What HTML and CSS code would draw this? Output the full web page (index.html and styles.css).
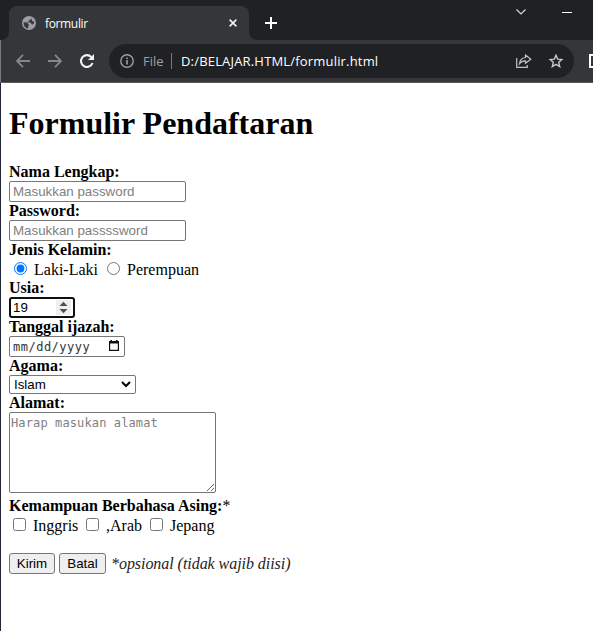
FILE: index.html
```html
<!DOCTYPE html>
<html lang="id">
<head>
<meta charset="utf-8">
<title>formulir</title>
<link rel="stylesheet" href="styles.css">
</head>
<body>
<header class="browser">
  <div class="tabs">
    <div class="tab">
      <svg class="globe" width="14" height="14" viewBox="0 0 14 14"><circle cx="7" cy="7" r="7" fill="#9aa0a6"/><path d="M1.5 6.2L4.8 6.4L7 8.8L6.200 10.2L6.2 12.6Q1.8 12 1.5 6.2ZM7 1.5H9.500L9 3.2L7.2 4V5.500H5.500V6.600H8.700L9.600 8.200L11 8.500Q12.700 6.8 12 5.2L10.400 5.4L9.600 3.8L9.500 1.500" fill="#35363a"/></svg>
      <span class="tab-title">formulir</span>
      <svg class="close" width="8" height="8" viewBox="0 0 8 8"><path d="M.6 .6L7.4 7.4M7.4 .6L.6 7.4" stroke="#f1f3f4" stroke-width="1.6"/></svg>
    </div>
    <svg class="plus" width="12" height="12" viewBox="0 0 12 12"><path d="M6 0V12M0 6H12" stroke="#fff" stroke-width="2"/></svg>
    <div class="window-buttons">
      <svg width="10" height="6" viewBox="0 0 10 6"><path d="M.5 .5L5 5L9.5 .5" fill="none" stroke="#ddd" stroke-width="1.1"/></svg>
      <svg width="10" height="6" viewBox="0 0 10 6"><path d="M0 3.5H10" stroke="#fff"/></svg>
    </div>
  </div>
  <div class="toolbar">
    <div class="nav">
      <svg width="14" height="14" viewBox="0 0 14 14"><path d="M14 7H1.5M7 .8L1 7L7 13.2" fill="none" stroke="#85878a" stroke-width="1.8"/></svg>
      <svg width="14" height="14" viewBox="0 0 14 14"><path d="M0 7H12.5M7 .8L13 7L7 13.2" fill="none" stroke="#85878a" stroke-width="1.8"/></svg>
      <svg width="14" height="14" viewBox="0 0 14 14"><path d="M12.5 9A5.9 5.9 0 1 1 11.3 3.1" fill="none" stroke="#f1f3f4" stroke-width="2.1"/><path d="M14 0V6H8Z" fill="#f1f3f4"/></svg>
    </div>
    <div class="address">
      <svg width="14" height="14" viewBox="0 0 14 14"><circle cx="7" cy="7" r="6.2" fill="none" stroke="#9aa0a6" stroke-width="1.4"/><path d="M7 6V10.5M7 3.4V5" stroke="#9aa0a6" stroke-width="1.6"/></svg>
      <span class="scheme">File</span>
      <span class="divider"></span>
      <span class="url">D:/BELAJAR.HTML/formulir.html</span>
      <svg class="share" width="16" height="14" viewBox="0 0 16 14"><path d="M.7 4V13.3H11.3V11" fill="none" stroke="#bfc1c4" stroke-width="1.2"/><path d="M9.5 1L14.8 5.2L9.5 9.2V6.9Q5.5 6.8 3.5 9.7Q4 4.2 9.5 3.5Z" fill="none" stroke="#bfc1c4" stroke-width="1.2"/></svg>
      <svg class="star" width="14" height="14" viewBox="0 0 14 14"><path d="M7 1.3L8.7 5.1L12.9 5.5L9.7 8.3L10.7 12.5L7 10.3L3.3 12.5L4.3 8.3L1.1 5.5L5.3 5.1Z" fill="none" stroke="#c8cacd" stroke-width="1.4"/></svg>
    </div>
    <span class="panel-icon"></span>
  </div>
</header>
<main class="page">
  <h1>Formulir Pendaftaran</h1>
  <form>
    <label class="caption">Nama Lengkap:</label>
    <input class="field text" type="text" placeholder="Masukkan password">
    <label class="caption">Password:</label>
    <input class="field text" type="password" placeholder="Masukkan passssword">
    <label class="caption">Jenis Kelamin:</label>
    <div class="options radios">
      <input type="radio" name="jk" checked><span class="laki">Laki-Laki</span>
      <input type="radio" name="jk"><span class="perempuan">Perempuan</span>
    </div>
    <label class="caption">Usia:</label>
    <div class="field age">
      <span>19</span>
      <svg width="15" height="15" viewBox="0 0 15 15"><path d="M0 0H15V15H0Z" fill="#efefef"/><path d="M3.5 6L7.5 1.7L11.5 6ZM3.5 9L7.5 13.3L11.5 9Z" fill="#505050"/></svg>
    </div>
    <label class="caption">Tanggal ijazah:</label>
    <div class="field date">
      <span>mm/dd/yyyy</span>
      <svg width="10" height="11" viewBox="0 0 10 11"><path d="M.6 2H9.400V10.400H.6Z" fill="none" stroke="#111" stroke-width="1.2"/><path d="M0 1H10V3.500H0ZM1.5 0H3V2H1.5ZM7 0H8.5V2H7Z" fill="#111"/></svg>
    </div>
    <label class="caption">Agama:</label>
    <div class="field religion">
      <span>Islam</span>
      <svg width="10" height="7" viewBox="0 0 10 7"><path d="M1 1L5 5L9 1" fill="none" stroke="#000" stroke-width="2"/></svg>
    </div>
    <label class="caption">Alamat:</label>
    <textarea class="field address-box" placeholder="Harap masukan alamat"></textarea>
    <label class="caption skills">Kemampuan Berbahasa Asing:<span class="mark">*</span></label>
    <div class="options checks">
      <input type="checkbox"><span class="inggris">Inggris</span>
      <input type="checkbox"><span class="arab">,Arab</span>
      <input type="checkbox"><span class="jepang">Jepang</span>
    </div>
    <div class="actions">
      <button type="button" class="send">Kirim</button>
      <button type="button" class="cancel">Batal</button>
      <em>*opsional (tidak wajib diisi)</em>
    </div>
  </form>
</main>
</body>
</html>
```
FILE: styles.css
```css
* { box-sizing: border-box; }
body { margin: 0; height: 631px; overflow: hidden; background: #fff; color: #000; font: 16px/18px "Liberation Serif", serif; }
svg { display: block; flex: none; }
span, em, label { white-space: nowrap; }
.browser { height: 83px; background: #35363a; border-bottom: 1px solid #5b5c60; font: 12px "Open Sans", sans-serif; color: #fff; overflow: hidden; }
.tabs { height: 40px; display: flex; padding: 6px 0 0 9px; background: radial-gradient(circle at 1px 32px, #202124 7.5px, #35363a 8.5px) 0 100% / 9px 8px no-repeat, radial-gradient(circle at 8px 0, #202124 7.5px, #35363a 8.5px) 249px 100% / 8px 8px no-repeat, #202124; background: radial-gradient(circle at 1px 0, #202124 7.5px, #35363a 8.5px) 0 100% / 9px 8px no-repeat, radial-gradient(circle at 8px 0, #202124 7.5px, #35363a 8.5px) 249px 100% / 8px 8px no-repeat, #202124; }
.tab { width: 240px; height: 34px; display: flex; align-items: center; padding: 0 12px 0 13px; background: #35363a; border-radius: 8px 8px 0 0; }
.tab-title { flex: 1; margin-left: 9px; font-size: 12px; letter-spacing: -.35px; }
.plus { margin: 11px 0 0 16px; }
.window-buttons { display: flex; gap: 36px; margin: 3px 21px 0 auto; }
.toolbar { height: 42px; display: flex; align-items: center; padding-left: 15px; border-left: 1px solid #77797b; }
.nav { display: flex; gap: 18px; width: 93px; flex: none; }
.address { width: 465px; height: 34px; display: flex; align-items: center; padding: 0 11px; border-radius: 17px; background: #202124; flex: none; font-size: 14px; }
.nav { width: 78px; margin-right: 15px; }
.scheme { width: 28px; margin-left: 9px; color: #9aa0a6; font-size: 13px; }
.divider { width: 1px; height: 16px; background: #777a7e; }
.url { margin-left: 9px; font-size: 13px; letter-spacing: .18px; }
.share { margin-left: auto; }
.star { margin-left: 17px; }
.panel-icon { width: 14px; height: 14px; margin-left: 15px; border: 2px solid #fff; flex: none; }
.page { height: 548px; padding: 22px 9px 0 8px; border-left: 1px solid #202638; }
h1 { margin: 0 0 21px; font-size: 32px; line-height: 37px; white-space: nowrap; }
.caption { display: block; height: 18px; font-weight: bold; }
.mark { font-weight: normal; }
.field { display: flex; align-items: center; border: 1px solid #767676; border-radius: 2px; background: #fff; font: 13.333px "Liberation Sans", sans-serif; }
.text { width: 177px; height: 21px; padding: 1px 3px; }
.field::placeholder { color: #808080; }
.options { display: flex; align-items: center; }
.options input { width: 13px; height: 13px; margin: 0 7px 0 0; flex: none; }
.radios { height: 20px; padding: 2px 0 0 5px; }
.radios input { margin-top: -4px; }
.laki { width: 73px; }
.age { width: 66px; height: 21px; border: 2px solid #101010; border-radius: 3px; justify-content: space-between; padding: 0 2px; }
.date { width: 116px; height: 21px; padding: 0 5px 0 3px; justify-content: space-between; font: 12px "DejaVu Sans Mono", monospace; letter-spacing: .5px; color: #333; }
.date svg { margin-top: -2px; }
.religion { width: 127px; height: 19px; padding: 0 4px; justify-content: space-between; }
.address-box { width: 207px; height: 81px; padding: 3px 2px 2px 1px; font: 12px "DejaVu Sans Mono", monospace; letter-spacing: .12px; resize: both; }
.skills { margin-top: 4px; }
.checks { height: 20px; padding: 2px 0 0 4px; }
.checks input { margin-top: -4px; }
.inggris { width: 53px; }
.arab { width: 44px; }
.actions { display: flex; align-items: center; height: 21px; margin-top: 18px; }
button { height: 21px; padding: 0; border: 1px solid #767676; border-radius: 3px; background: #efefef; color: #000; font: 13.333px "Liberation Sans", sans-serif; }
.send { width: 46px; }
.cancel { width: 47px; margin-left: 4px; }
em { margin-left: 5px; letter-spacing: -.05px; color: #222; }
```
